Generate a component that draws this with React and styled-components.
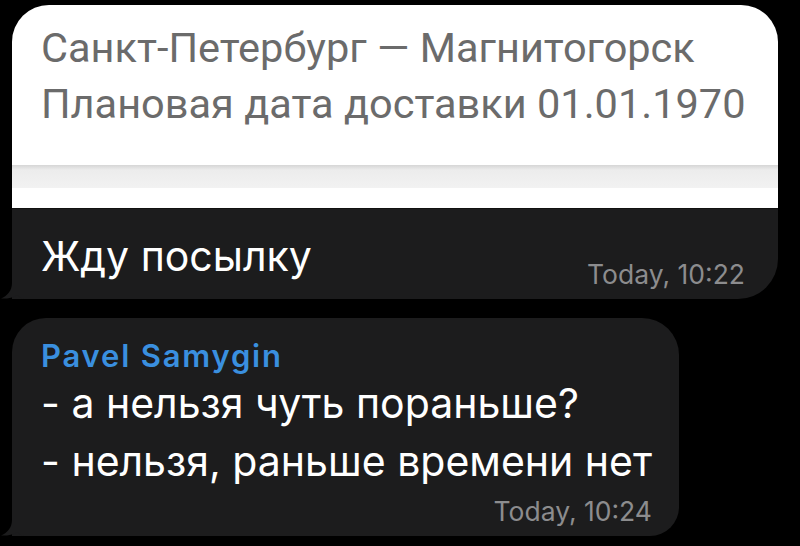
import React from 'react';
import styled, { createGlobalStyle } from 'styled-components';

const Global = createGlobalStyle`
  html, body { margin: 0; padding: 0; background: #000; }
  body { width: 800px; height: 546px; overflow: hidden; }
`;

const Screen = styled.div`
  width: 800px;
  height: 546px;
  box-sizing: border-box;
  background: #000;
  display: flex;
  flex-direction: column;
  align-items: flex-start;
  gap: 19px;
  padding: 5px 0 0 12px;
`;

const Bubble = styled.div`
  position: relative;
  box-sizing: border-box;
  width: ${(p) => p.$w}px;
  background: #1c1c1d;
  border-radius: ${(p) => p.$radius};
  font-family: Inter, "Liberation Sans", sans-serif;
  display: flex;
  flex-direction: column;
`;

const Card = styled.div`
  background: #fff;
  border-radius: 37px 37px 0 0;
  height: 203px;
  display: flex;
  flex-direction: column;
`;

const CardText = styled.div`
  flex: 1;
  padding: 15px 29px 0;
  font-family: Roboto, "Liberation Sans", sans-serif;
  font-size: 41.5px;
  line-height: 56px;
  color: #6b6b6b;
  white-space: nowrap;
`;

const CardBand = styled.div`
  height: 23px;
  margin-bottom: 20px;
  background: linear-gradient(#d6d6d6, #ececec 5px, #f2f2f2);
`;

const DarkRow = styled.div`
  height: 91px;
  box-sizing: border-box;
  display: flex;
  justify-content: space-between;
  align-items: flex-start;
  padding: 22px 33px 0 29px;
  border-top: 1px solid #111;
`;

const Message = styled.div`
  color: #fff;
  font-size: 41px;
  line-height: ${(p) => p.$lh || 50}px;
  white-space: nowrap;
`;

const Time = styled.div`
  color: #8c8c8e;
  font-size: 26.5px;
  line-height: 30px;
  white-space: nowrap;
  align-self: ${(p) => p.$self || 'auto'};
  margin-top: ${(p) => p.$mt || 0}px;
`;

const Body = styled.div`
  padding: 20px 27px 10px 29px;
  display: flex;
  flex-direction: column;
`;

const Author = styled.div`
  color: #3a8fdf;
  font-size: 31px;
  font-weight: 600;
  line-height: 36px;
  letter-spacing: 1.8px;
  margin-bottom: 0;
`;

const TailSvg = styled.svg`
  position: absolute;
  left: -12px;
  bottom: 0;
  width: 24px;
  height: 32px;
  display: block;
`;

const Tail = () => (
  <TailSvg viewBox="0 0 24 32">
    <path d="M12 0 L12 16 C12 24 7 29 1 31.5 C6 32 13 31 17 28 C19 30 22 32 24 32 L24 0 Z" fill="#1c1c1d" />
  </TailSvg>
);

export default function App() {
  return (
    <>
      <Global />
      <Screen>
        <Bubble $w={766} $radius="37px 40px 40px 0">
          <Card>
            <CardText>
              <div>Санкт-Петербург — Магнитогорск</div>
              <div>Плановая дата доставки 01.01.1970</div>
            </CardText>
            <CardBand />
          </Card>
          <DarkRow>
            <Message>Жду посылку</Message>
            <Time $mt={28}>Today, 10:22</Time>
          </DarkRow>
          <Tail />
        </Bubble>
        <Bubble $w={667} $radius="34px 37px 29px 0">
          <Body>
            <Author>Pavel Samygin</Author>
            <Message $lh={58}>- а нельзя чуть пораньше?</Message>
            <Message $lh={58}>- нельзя, раньше времени нет</Message>
            <Time $self="flex-end" $mt={6}>Today, 10:24</Time>
          </Body>
          <Tail />
        </Bubble>
      </Screen>
    </>
  );
}
